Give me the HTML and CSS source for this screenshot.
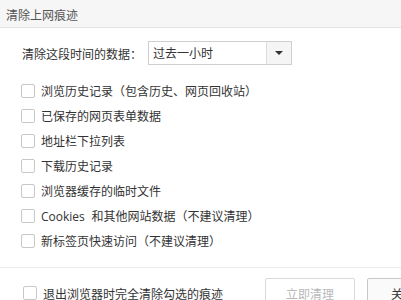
FILE: index.html
```html
<!DOCTYPE html>
<html lang="zh-CN">
<head>
<meta charset="utf-8">
<link rel="stylesheet" href="styles.css">
</head>
<body>
<div class="dialog">
  <div class="titlebar">清除上网痕迹</div>
  <div class="content">
    <div class="range">
      <span class="range-label">清除这段时间的数据：</span>
      <div class="select">
        <span class="select-value">过去一小时</span>
        <span class="select-btn"><span class="tri"></span></span>
      </div>
    </div>
    <ul class="list">
      <li class="row"><span class="cb"></span><span>浏览历史记录（包含历史、网页回收站）</span></li>
      <li class="row"><span class="cb"></span><span>已保存的网页表单数据</span></li>
      <li class="row"><span class="cb"></span><span>地址栏下拉列表</span></li>
      <li class="row"><span class="cb"></span><span>下载历史记录</span></li>
      <li class="row"><span class="cb"></span><span>浏览器缓存的临时文件</span></li>
      <li class="row"><span class="cb"></span><span><span class="latin">Cookies</span> 和其他网站数据（不建议清理）</span></li>
      <li class="row"><span class="cb"></span><span>新标签页快速访问（不建议清理）</span></li>
    </ul>
  </div>
  <div class="footer">
    <div class="exit"><span class="cb"></span><span>退出浏览器时完全清除勾选的痕迹</span></div>
    <div class="buttons">
      <button class="btn btn-disabled">立即清理</button>
      <button class="btn btn-close">关闭</button>
    </div>
  </div>
</div>
</body>
</html>
```

FILE: styles.css
```css
html, body {
  margin: 0;
  padding: 0;
  width: 401px;
  height: 300px;
  overflow: hidden;
  background: #ffffff;
}
body {
  font-family: "Noto Sans CJK SC", "Noto Sans", sans-serif;
  font-size: 12px;
  color: #333333;
}
.latin {
  font-family: "Open Sans", "Noto Sans CJK SC", sans-serif;
  margin-right: 4px;
}
.dialog {
  width: 401px;
  height: 300px;
  display: flex;
  flex-direction: column;
}
.titlebar {
  height: 28px;
  line-height: 29px;
  box-sizing: border-box;
  background: #f6f6f6;
  border-bottom: 1px solid #e3e3e3;
  padding-left: 6px;
  color: #555555;
  flex: none;
}
.content {
  padding-left: 21px;
  flex: none;
}
.range {
  display: flex;
  align-items: center;
  margin-top: 13px;
  height: 24px;
  padding-left: 1px;
}
.range-label {
  width: 126px;
  flex: none;
}
.select {
  width: 144px;
  height: 24px;
  box-sizing: border-box;
  border: 1px solid #cfcfcf;
  display: flex;
  align-items: stretch;
  background: #fff;
}
.select-value {
  flex: 1;
  padding-left: 4px;
  line-height: 22px;
}
.select-btn {
  width: 24px;
  border-left: 1px solid #dcdcdc;
  background: #f5f5f5;
  display: flex;
  align-items: center;
  justify-content: center;
}
.tri {
  width: 0;
  height: 0;
  border-left: 4px solid transparent;
  border-right: 4px solid transparent;
  border-top: 4px solid #333;
}
.list {
  list-style: none;
  margin: 13px 0 0 0;
  padding: 0;
}
.row {
  height: 25px;
  display: flex;
  align-items: center;
  gap: 6px;
}
.cb {
  width: 14px;
  height: 14px;
  box-sizing: border-box;
  border: 1px solid #c8c8c8;
  border-radius: 2px;
  background: #fff;
  flex: none;
}
.footer {
  margin-top: 14px;
  border-top: 1px solid #ececec;
  display: flex;
  align-items: flex-start;
  padding-top: 10px;
  flex: none;
}
.exit {
  display: flex;
  align-items: center;
  gap: 6px;
  padding-left: 23px;
  height: 30px;
  width: 242px;
  flex: none;
}
.buttons {
  display: flex;
  gap: 12px;
  flex: none;
}
.btn {
  height: 30px;
  box-sizing: border-box;
  border: 1px solid #d9d9d9;
  border-radius: 2px;
  background: #ffffff;
  font-family: inherit;
  font-size: 12px;
  padding: 0;
  flex: none;
}
.btn-disabled {
  width: 90px;
  color: #b8b8b8;
}
.btn-close {
  width: 72px;
  color: #333333;
  border-color: #c8c8c8;
  background: #fafafa;
}
```
